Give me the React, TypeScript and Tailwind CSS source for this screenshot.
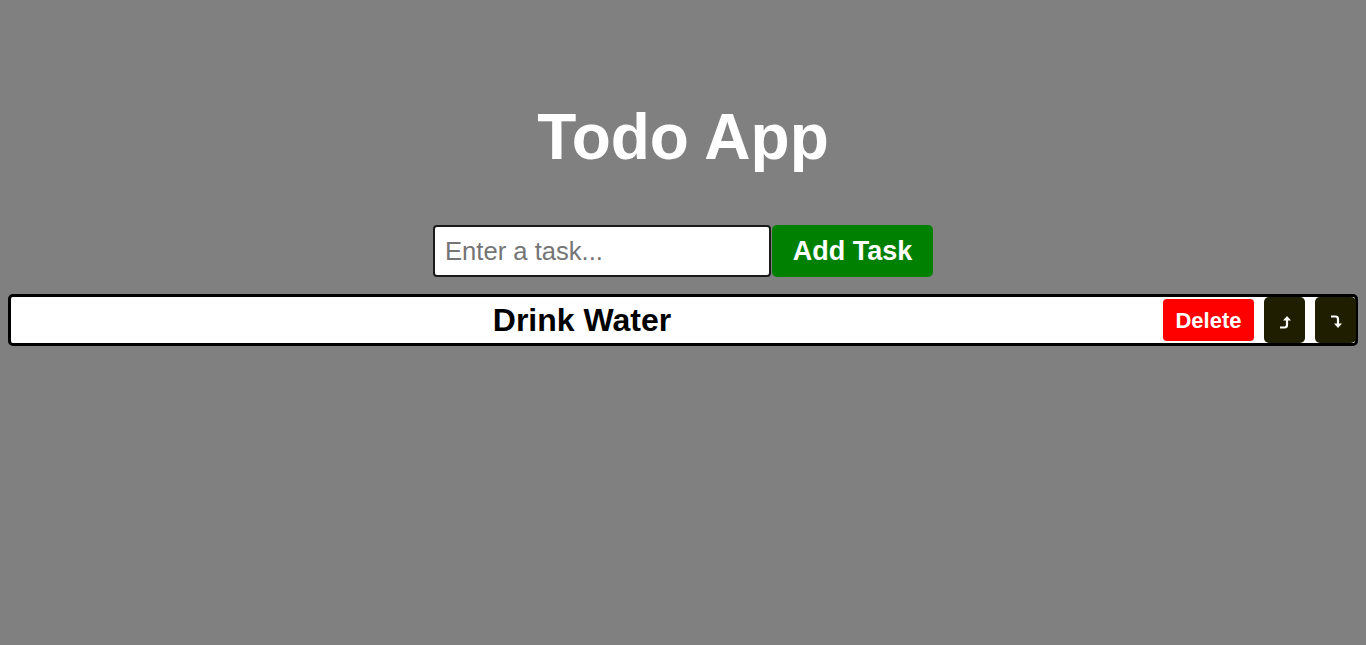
import React from "react";

function ArrowUp() {
  return (
    <svg width="14" height="16" viewBox="0 0 14 16" fill="none">
      <path d="M2 13.5 H6.5 Q9 13.5 9 11 V5" stroke="white" strokeWidth="2.2" strokeLinecap="butt" />
      <polygon points="5,6.5 9,2 13,6.5" fill="white" />
    </svg>
  );
}

function ArrowDown() {
  return (
    <svg width="14" height="16" viewBox="0 0 14 16" fill="none">
      <path d="M2 2.5 H6.5 Q9 2.5 9 5 V11" stroke="white" strokeWidth="2.2" strokeLinecap="butt" />
      <polygon points="5,9.5 9,14 13,9.5" fill="white" />
    </svg>
  );
}

export default function App() {
  return (
    <div
      className="min-h-screen w-full bg-[#808080] pt-[100px]"
      style={{ fontFamily: '"Liberation Sans", Arial, sans-serif' }}
    >
      <h1 className="text-center text-[64px] leading-[74px] font-bold text-white">Todo App</h1>
      <div className="mt-[51px] flex justify-center">
        <input
          type="text"
          placeholder="Enter a task..."
          className="h-[52px] w-[338px] rounded-[4px] border-2 border-[#1a1a1a] bg-white px-[10px] text-[25.6px] text-black outline-none placeholder:text-[#757575]"
        />
        <button className="ml-px h-[52px] w-[161px] rounded-[5px] bg-[#008000] text-[27px] font-bold text-white">
          Add Task
        </button>
      </div>
      <div className="mx-2 mt-[17px] flex h-[52px] items-center gap-[10px] rounded-[5px] border-[3px] border-black bg-white">
        <span className="flex-1 text-center text-[32px] font-bold text-black">Drink Water</span>
        <button className="h-[42px] w-[91px] rounded-[4px] bg-[#ff0000] text-[22px] font-bold text-white">
          Delete
        </button>
        <button aria-label="Move up" className="flex h-[46px] w-[41px] items-center justify-center rounded-[5px] bg-[#1f1e00] pt-[4px]">
          <ArrowUp />
        </button>
        <button aria-label="Move down" className="mr-[-1px] flex h-[46px] w-[41px] items-center justify-center rounded-[5px] bg-[#1f1e00] pt-[4px]">
          <ArrowDown />
        </button>
      </div>
    </div>
  );
}
